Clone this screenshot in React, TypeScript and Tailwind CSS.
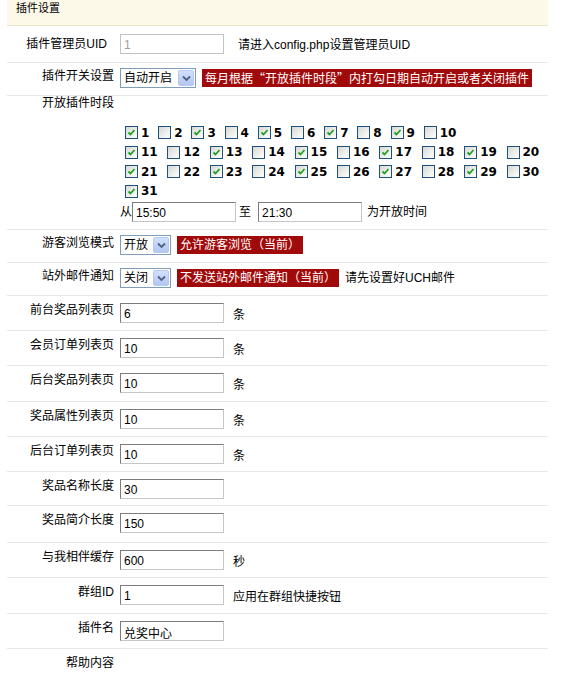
import React from "react";

const inputCls =
  "h-[20px] w-[104px] border border-t-[#7c7c7c] border-l-[#7c7c7c] border-r-[#c6c6c6] border-b-[#c6c6c6] bg-white px-[3px] pt-[2px] text-[12px] leading-[16px] text-black outline-none";

function Row({
  h,
  label,
  labelPt = "pt-[7px]",
  labelPr = "",
  children,
}: {
  h: string;
  label: string;
  labelPt?: string;
  labelPr?: string;
  children?: React.ReactNode;
}) {
  return (
    <div className={`flex border-b border-[#e8e8e8] ${h}`}>
      <div className={`w-[107px] shrink-0 text-right text-[12px] leading-[14px] ${labelPt} ${labelPr}`}>{label}</div>
      <div className="ml-[6px] flex items-start">{children}</div>
    </div>
  );
}

function TextRow({ h, label, value, unit }: { h: string; label: string; value: string; unit?: string }) {
  return (
    <Row h={h} label={label}>
      <input className={`${inputCls} mt-[7px]`} defaultValue={value} readOnly />
      {unit && <span className="ml-[9px] mt-[12px] text-[12px] leading-[14px]">{unit}</span>}
    </Row>
  );
}

function Select({ value, w }: { value: string; w: string }) {
  return (
    <div className={`mt-[5px] flex h-[20px] ${w} items-center justify-between border border-[#7f9db9] bg-white pl-[3px] pr-[1px]`}>
      <span className="text-[12px] leading-[14px]">{value}</span>
      <span className="flex h-[16px] w-[16px] items-center justify-center rounded-[2px] border border-[#b7c8ef] bg-gradient-to-b from-[#d3e0fd] to-[#b3c7f3]">
        <svg width="9" height="7" viewBox="0 0 9 7">
          <path d="M1 1.5 L4.5 5 L8 1.5" fill="none" stroke="#4d6185" strokeWidth="1.8" />
        </svg>
      </span>
    </div>
  );
}

function Badge({ children }: { children: React.ReactNode }) {
  return (
    <span className="ml-[6px] mt-[6px] inline-block h-[18px] bg-[#a10a0a] px-[3px] text-[12px] leading-[18px] text-white">
      {children}
    </span>
  );
}

function Box({ checked }: { checked: boolean }) {
  return (
    <span className="flex h-[13px] w-[13px] shrink-0 items-center justify-center border border-[#1c5180] bg-gradient-to-br from-[#d8d8d2] to-white">
      {checked && (
        <svg width="11" height="11" viewBox="0 0 11 11">
          <path d="M2.5 5.5 L4.5 7.5 L8.5 3" fill="none" stroke="#21a121" strokeWidth="1.8" />
        </svg>
      )}
    </span>
  );
}

const dayRows = [
  [1, 2, 3, 4, 5, 6, 7, 8, 9, 10],
  [11, 12, 13, 14, 15, 16, 17, 18, 19, 20],
  [21, 22, 23, 24, 25, 26, 27, 28, 29, 30],
  [31],
];

export default function App() {
  return (
    <div className="min-h-[678px] bg-white font-['Liberation_Sans','Noto_Sans_CJK_SC',sans-serif] text-black">
      <div className="ml-[7px] w-[541px]">
        {/* 标题栏 */}
        <div className="h-[26px] border-b border-[#ebe6cc] bg-[#fcf9e9] pl-[9px] pt-[1px] text-[11px] leading-[14px]">
          插件设置
        </div>

        <Row h="h-[37px]" label="插件管理员UID" labelPt="pt-[11px]" labelPr="pr-[7px]">
          <input
            className="mt-[8px] h-[20px] w-[104px] border border-[#c3c3c3] bg-white px-[3px] pt-[2px] text-[12px] leading-[16px] text-[#a0a0a0] outline-none"
            defaultValue="1"
            readOnly
          />
          <span className="ml-[14px] mt-[12px] text-[12px] leading-[14px]">请进入config.php设置管理员UID</span>
        </Row>

        <Row h="h-[33px]" label="插件开关设置" labelPt="pt-[6px]">
          <Select value="自动开启" w="w-[76px]" />
          <Badge>
            每月根据<span className="font-['Noto_Sans_CJK_SC',sans-serif]">“</span>开放插件时段
            <span className="font-['Noto_Sans_CJK_SC',sans-serif]">”</span>内打勾日期自动开启或者关闭插件
          </Badge>
        </Row>

        <Row h="h-[134px]" label="开放插件时段" labelPt="pt-0">
          <div className="flex flex-col pt-[27px]">
            {dayRows.map((row, i) => (
              <div key={i} className="ml-[5px] flex h-[19.5px] items-center">
                {row.map((d) => (
                  <span key={d} className={`flex items-center ${d < 10 ? "w-[33.2px]" : "w-[42.4px]"}`}>
                    <Box checked={d % 2 === 1} />
                    <span className="ml-[3px] font-['DejaVu_Sans',sans-serif] text-[12px] font-bold leading-[14px]">{d}</span>
                  </span>
                ))}
              </div>
            ))}
            <div className="flex items-center pt-[1px] text-[12px] leading-[14px]">
              <span>从</span>
              <input className={inputCls} defaultValue="15:50" readOnly />
              <span className="ml-[3px]">至</span>
              <input className={`${inputCls} ml-[7px]`} defaultValue="21:30" readOnly />
              <span className="ml-[5px]">为开放时间</span>
            </div>
          </div>
        </Row>

        <Row h="h-[33px]" label="游客浏览模式" labelPt="pt-[6px]">
          <Select value="开放" w="w-[51px]" />
          <Badge>允许游客浏览（当前）</Badge>
        </Row>

        <Row h="h-[33px]" label="站外邮件通知" labelPt="pt-[6px]">
          <Select value="关闭" w="w-[51px]" />
          <Badge>不发送站外邮件通知（当前）</Badge>
          <span className="ml-[6px] mt-[8px] text-[12px] leading-[14px]">请先设置好UCH邮件</span>
        </Row>

        <TextRow h="h-[35px]" label="前台奖品列表页" value="6" unit="条" />
        <TextRow h="h-[35px]" label="会员订单列表页" value="10" unit="条" />
        <TextRow h="h-[36px]" label="后台奖品列表页" value="10" unit="条" />
        <TextRow h="h-[35px]" label="奖品属性列表页" value="10" unit="条" />
        <TextRow h="h-[35px]" label="后台订单列表页" value="10" unit="条" />
        <TextRow h="h-[34px]" label="奖品名称长度" value="30" />
        <TextRow h="h-[37px]" label="奖品简介长度" value="150" />
        <TextRow h="h-[35px]" label="与我相伴缓存" value="600" unit="秒" />
        <TextRow h="h-[36px]" label="群组ID" value="1" unit="应用在群组快捷按钮" />
        <TextRow h="h-[35px]" label="插件名" value="兑奖中心" />

        <div className="flex h-[29px]">
          <div className="w-[107px] pt-[7px] text-right text-[12px] leading-[14px]">帮助内容</div>
        </div>
      </div>
    </div>
  );
}
